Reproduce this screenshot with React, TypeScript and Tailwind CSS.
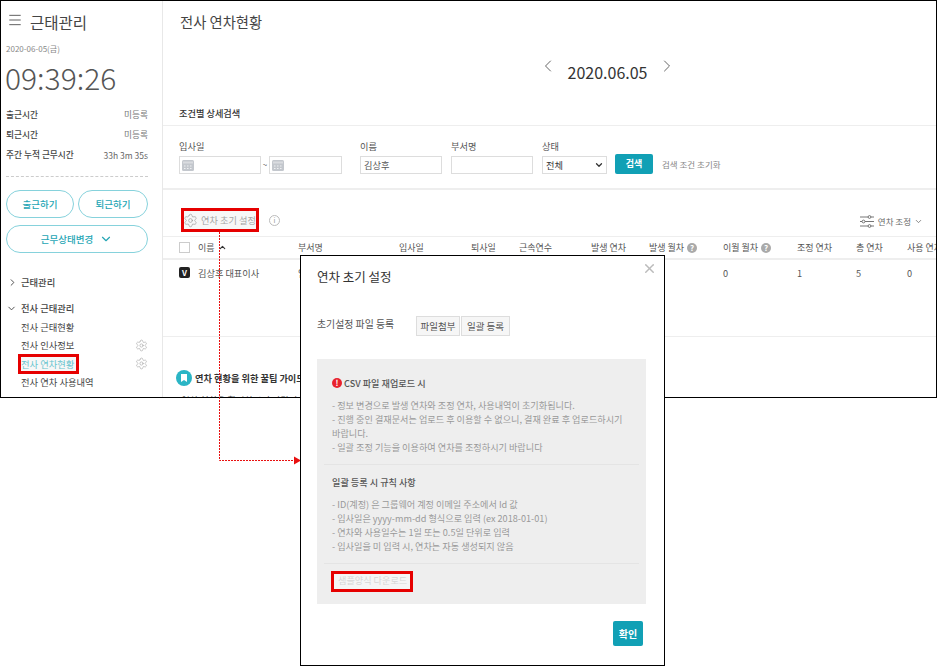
import { ChevronDown, ChevronLeft, ChevronRight, ChevronUp, Menu, Settings, X } from 'lucide-react';

const font = { fontFamily: '"Noto Sans CJK KR", "Noto Sans", sans-serif' };

function Gear({ size = 16 }: { size?: number }) {
  return <Settings size={size} strokeWidth={1} className="shrink-0 text-[#999]" />;
}

function Help() {
  return (
    <span className="ml-[3px] inline-flex h-[10px] w-[10px] items-center justify-center rounded-full bg-[#aaa] text-[8px] leading-none font-bold text-white">
      ?
    </span>
  );
}

function CalendarIcon() {
  return (
    <svg width="12" height="11" viewBox="0 0 12 11">
      <rect width="12" height="11" rx="1.5" fill="#c3c7cd" />
      <rect x="1" y="1.5" width="10" height="2" fill="#d9dbdf" />
      <path d="M2 6h1.5M5 6h1.5M8 6h1.5M2 8.5h1.5M5 8.5h1.5M8 8.5h1.5" stroke="#eef0f2" strokeWidth="1" />
    </svg>
  );
}

function SlidersIcon() {
  return (
    <svg width="14" height="13" viewBox="0 0 14 13" fill="none" stroke="#666" strokeWidth="0.9">
      <path d="M0 2h8M11 2h3M0 6.5h2M5 6.5h9M0 11h8M11 11h3" />
      <circle cx="9.5" cy="2" r="1.4" />
      <circle cx="3.5" cy="6.5" r="1.4" />
      <circle cx="9.5" cy="11" r="1.4" />
    </svg>
  );
}

function DateInput({ width }: { width: string }) {
  return (
    <div className={`flex h-[18px] items-center border border-[#ddd] pl-[2px] ${width}`}>
      <CalendarIcon />
    </div>
  );
}

function Sidebar() {
  return (
    <aside className="flex h-full w-[162px] shrink-0 flex-col border-r border-[#e8e8e8] text-[#444]">
      <div className="flex items-center pt-[11px] pl-[6px]">
        <Menu size={16} strokeWidth={1.4} className="-translate-y-[2px] text-[#555]" />
        <span className="ml-[7px] text-[15.5px] leading-[20px] text-[#444]">근태관리</span>
      </div>
      <div className="mt-[11px] pl-[5px] text-[8px] leading-[12px] text-[#888]">2020-06-05(금)</div>
      <div className="mt-[2px] pl-[4px] text-[30px] leading-[40px] font-light text-[#555]">09:39:26</div>
      <div className="mt-[11px] flex flex-col gap-[6px] pr-[14px] pl-[5px] text-[8.7px] leading-[14px]">
        <div className="flex justify-between">
          <span className="font-medium">출근시간</span>
          <span className="text-[#777]">미등록</span>
        </div>
        <div className="flex justify-between">
          <span className="font-medium">퇴근시간</span>
          <span className="text-[#777]">미등록</span>
        </div>
        <div className="flex justify-between">
          <span className="font-medium">주간 누적 근무시간</span>
          <span className="text-[8.5px] text-[#666]">33h 3m 35s</span>
        </div>
      </div>
      <div className="mt-[14px] mr-[14px] ml-[5px] border-t border-dashed border-[#ccc]" />
      <div className="mt-[13px] grid grid-cols-[68px_70px] gap-x-[4px] gap-y-[7px] pl-[5px] text-[9.5px] font-medium text-[#26a6b5]">
        <button className="h-[28px] rounded-full border border-[#86d2dc]">출근하기</button>
        <button className="h-[28px] rounded-full border border-[#86d2dc]">퇴근하기</button>
        <button className="col-span-2 flex h-[28px] items-center justify-center gap-[6px] rounded-full border border-[#86d2dc]">
          근무상태변경
          <ChevronDown size={14} />
        </button>
      </div>
      <div className="mt-[22px] flex items-center pl-[6px] text-[9.3px] leading-[14px] font-medium">
        <ChevronRight size={11} strokeWidth={2} />
        <span className="ml-[3px]">근태관리</span>
      </div>
      <div className="mt-[12px] flex items-center pl-[5px] text-[9.3px] leading-[14px] font-medium">
        <ChevronDown size={11} strokeWidth={2} />
        <span className="ml-[4px]">전사 근태관리</span>
      </div>
      <ul className="mt-[4.5px] flex flex-col gap-[4px] pr-[14px] pl-[20px] text-[9.3px] leading-[14.5px]">
        <li>전사 근태현황</li>
        <li className="flex items-center justify-between">전사 인사정보<Gear size={13} /></li>
        <li className="flex items-center justify-between text-[#6ccbd6]">전사 연차현황<Gear size={13} /></li>
        <li>전사 연차 사용내역</li>
      </ul>
    </aside>
  );
}

const columns = [
  ['w-[119px] pl-[19px]', '이름'],
  ['w-[101px]', '부서명'],
  ['w-[72px]', '입사일'],
  ['w-[48px]', '퇴사일'],
  ['w-[72px]', '근속연수'],
  ['w-[58px]', '발생 연차'],
];

function Main() {
  return (
    <main className="flex h-full min-w-0 flex-1 flex-col overflow-hidden text-[#555]">
      <h1 className="shrink-0 pt-[10px] pl-[17px] text-[14.3px] leading-[22px] font-normal text-[#444]">전사 연차현황</h1>
      <div className="mt-[27px] flex shrink-0 items-center justify-center pl-[116px] text-[#666]">
        <ChevronLeft size={20} strokeWidth={1.2} className="-translate-y-[6px]" />
        <span className="mx-[10px] text-[16px] leading-[24px] text-[#333]">2020.06.05</span>
        <ChevronRight size={20} strokeWidth={1.2} className="-translate-y-[6px]" />
      </div>
      <div className="mt-[22px] shrink-0 border-b border-[#eee] pb-[5px] pl-[16px] text-[9.2px] leading-[14px] font-medium text-[#333]">조건별 상세검색</div>
      <div className="flex h-[64px] shrink-0 gap-[9px] border-b-2 border-[#eee] pt-[13px] pl-[16px] text-[9.2px] leading-[14px]">
        <div className="mr-[9px]">
          <div>입사일</div>
          <div className="mt-[3px] flex items-center">
            <DateInput width="w-[82px]" />
            <span className="w-[8px] text-center text-[8px]">~</span>
            <DateInput width="w-[73px]" />
          </div>
        </div>
        <div>
          <div>이름</div>
          <div className="mt-[3px] flex h-[18px] w-[82px] items-center border border-[#ddd] pl-[3px]">김상후</div>
        </div>
        <div>
          <div>부서명</div>
          <div className="mt-[3px] h-[18px] w-[82px] border border-[#ddd]" />
        </div>
        <div>
          <div>상태</div>
          <div className="mt-[3px] flex h-[18px] w-[65px] items-center justify-between border border-[#ddd] pr-[2px] pl-[3px] text-[#333]">
            전체
            <ChevronDown size={10} strokeWidth={3} />
          </div>
        </div>
        <button className="mt-[15px] -ml-[1px] h-[20px] w-[38px] rounded-[2px] bg-[#11a0b5] text-[9px] font-bold text-white">검색</button>
        <span className="mt-[18px] text-[8.5px] text-[#888]">검색 조건 초기화</span>
      </div>
      <div className="flex h-[47px] shrink-0 items-end justify-between border-b border-[#eee] pr-[13px] pb-[8px] pl-[20px]">
        <div className="flex items-center text-[9.2px] text-[#aaa]">
          <Gear size={15} />
          <span className="ml-[3px]">연차 초기 설정</span>
          <span className="ml-[13px] flex h-[11px] w-[11px] items-center justify-center rounded-full border border-[#bbb] text-[7px] leading-none text-[#999]">i</span>
        </div>
        <div className="flex items-center text-[8.5px] text-[#666]">
          <SlidersIcon />
          <span className="ml-[4px]">연차 조정</span>
          <ChevronDown size={9} className="ml-[3px]" />
        </div>
      </div>
      <div className="relative flex h-[23px] shrink-0 items-center border-b-2 border-[#eee] pl-[16px] text-[9px] whitespace-nowrap">
        <span className="absolute left-[16px] h-[11px] w-[11px] border border-[#ccc]" />
        {columns.map(([w, label]) => (
          <span key={label} className={`${w} flex shrink-0 items-center`}>
            {label}
            {label === '이름' && <ChevronUp size={9} strokeWidth={3} className="ml-[3px] text-[#333]" />}
          </span>
        ))}
        <span className="flex w-[74px] shrink-0 items-center">발생 월차<Help /></span>
        <span className="flex w-[74px] shrink-0 items-center">이월 월차<Help /></span>
        <span className="w-[59px] shrink-0">조정 연차</span>
        <span className="w-[51px] shrink-0">총 연차</span>
        <span className="shrink-0">사용 연차</span>
      </div>
      <div className="flex h-[77px] shrink-0 border-b border-[#eee] pt-[6px] pl-[16px] text-[9.2px] leading-[14px] whitespace-nowrap">
        <span className="mt-[1px] flex h-[11px] w-[11px] shrink-0 items-center justify-center rounded-[2px] bg-[#222] text-[8px] font-bold text-white">V</span>
        <span className="ml-[8px] w-[100px] shrink-0">김상후 대표이사</span>
        <span className="w-[425px] shrink-0">임원</span>
        <span className="w-[74px] shrink-0">0</span>
        <span className="w-[59px] shrink-0">1</span>
        <span className="w-[51px] shrink-0">5</span>
        <span>0</span>
      </div>
      <div className="mt-[33px] flex shrink-0 items-center pl-[13px] text-[9.2px] leading-[16px] font-bold whitespace-nowrap text-[#333]">
        <svg width="16" height="16" viewBox="0 0 16 16">
          <circle cx="8" cy="8" r="8" fill="#2bb5c5" />
          <path d="M5 4h6v8l-3-2-3 2z" fill="#fff" />
        </svg>
        <span className="ml-[3px]">연차 현황을 위한 꿀팁 가이드</span>
      </div>
      <div className="mt-[7px] shrink-0 pl-[13px] text-[9.2px] leading-[14px]">- 연차 현황을 확인하시기 바랍니다</div>
    </main>
  );
}

function Modal() {
  return (
    <section className="absolute top-[255px] left-[300px] flex h-[411px] w-[365px] flex-col border border-black bg-white pr-[18px] pl-[16px] text-[#555]">
      <X size={15} strokeWidth={2.4} className="absolute top-[5px] right-[7px] text-[#bbb]" />
      <h2 className="mt-[12px] text-[12.5px] leading-[18px] font-normal text-[#333]">연차 초기 설정</h2>
      <div className="mt-[30px] flex items-start text-[9.5px]">
        <span className="w-[99px] text-[9.9px] leading-[16px]">초기설정 파일 등록</span>
        <div className="flex gap-[1px]">
          <span className="flex h-[20px] w-[44px] items-center justify-center border border-[#ddd] bg-[#f6f6f6]">파일첨부</span>
          <span className="flex h-[20px] w-[49px] items-center justify-center border border-[#ddd] bg-[#f6f6f6]">일괄 등록</span>
        </div>
      </div>
      <div className="mt-[23px] h-[245px] shrink-0 bg-[#eeeeee] pt-[17px] pr-[14px] pl-[15px] text-[9.15px] leading-[14px] text-[#999]">
        <div className="flex items-center font-medium text-[#555]">
          <span className="mr-[2px] flex h-[10px] w-[10px] items-center justify-center rounded-full bg-[#e8222e] text-[8px] font-bold text-white">!</span>
          CSV 파일 재업로드 시
        </div>
        <p className="mt-[8px]">- 정보 변경으로 발생 연차와 조정 연차, 사용내역이 초기화됩니다.</p>
        <p>- 진행 중인 결재문서는 업로드 후 이용할 수 없으니, 결재 완료 후 업로드하시기 바랍니다.</p>
        <p>- 일괄 조정 기능을 이용하여 연차를 조정하시기 바랍니다</p>
        <div className="mt-[10px] -mr-[7px] -ml-[8px] border-t border-[#e4e4e4]" />
        <div className="mt-[10px] font-medium text-[#555]">일괄 등록 시 규칙 사항</div>
        <p className="mt-[8px]">- ID(계정) 은 그룹웨어 계정 이메일 주소에서 Id 값</p>
        <p>- 입사일은 yyyy-mm-dd 형식으로 입력 (ex 2018-01-01)</p>
        <p>- 연차와 사용일수는 1일 또는 0.5일 단위로 입력</p>
        <p>- 입사일을 미 입력 시, 연차는 자동 생성되지 않음</p>
        <div className="mt-[10px] -mr-[7px] -ml-[8px] border-t border-[#e4e4e4]" />
        <div className="mt-[9px] pl-[6px] text-[#bbb]">샘플양식 다운로드</div>
      </div>
      <button className="mt-[17px] mr-[3px] ml-auto h-[25px] w-[30px] rounded-[2px] bg-[#11a0b5] text-[10px] font-bold text-white">확인</button>
    </section>
  );
}

export default function App() {
  return (
    <div style={font} className="relative h-[666px] w-[937px] overflow-hidden bg-white">
      <div className="flex h-[398px] w-[937px] overflow-hidden border border-black">
        <Sidebar />
        <Main />
      </div>
      <svg className="absolute top-0 left-0" width="937" height="666">
        <path d="M219.5 232V460.5H294" fill="none" stroke="#e81010" strokeWidth="1" strokeDasharray="2 1" />
        <path d="M294 456.5L301 460.5L294 464.5Z" fill="#e81010" />
      </svg>
      <Modal />
      <span className="absolute top-[208px] left-[181px] h-[24px] w-[78px] border-[3px] border-[#e60000] bg-black/[0.03]" />
      <span className="absolute top-[354px] left-[18px] h-[20px] w-[61px] border-[3px] border-[#e60000] bg-black/[0.03]" />
      <span className="absolute top-[571px] left-[331px] h-[21px] w-[82px] border-[3px] border-[#e60000] bg-white/40" />
    </div>
  );
}
